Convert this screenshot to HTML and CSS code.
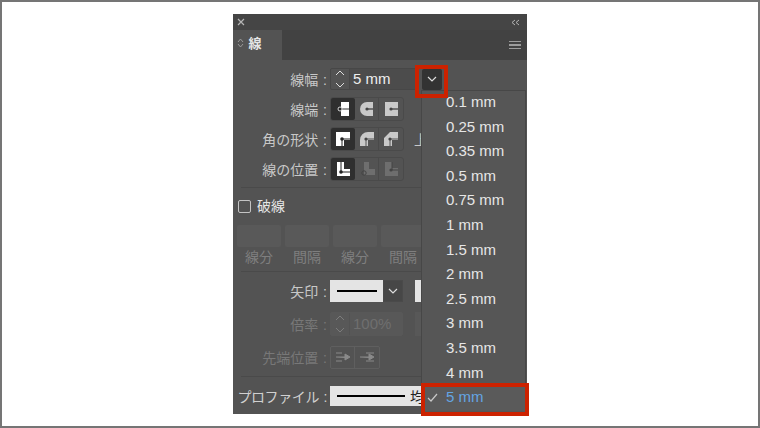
FILE: index.html
```html
<!DOCTYPE html>
<html lang="ja">
<head>
    <meta charset="UTF-8">
    <title>線パネル</title>
    <link rel="stylesheet" href="styles.css">
</head>
<body>
    <svg class="defs" width="0" height="0">
        <symbol id="cap-butt" viewBox="0 0 16 16"><path d="M6 1h8v14H6z" fill="currentColor"/><path d="M5 8h9" stroke="#333" stroke-width="1"/><circle cx="5" cy="8" r="2" fill="#222" stroke="#fff" stroke-width=".8"/></symbol>
        <symbol id="cap-round" viewBox="0 0 16 16"><path d="M8 1h6v14H8a7 7 0 0 1 0-14z" fill="currentColor"/><path d="M8 8h6" stroke="#555" stroke-width="1.5"/><circle cx="8" cy="8" r="1.6" fill="#444"/></symbol>
        <symbol id="cap-square" viewBox="0 0 16 16"><path d="M2 1h13v14H2z" fill="currentColor"/><path d="M8 8h7" stroke="#555" stroke-width="1.5"/><circle cx="8" cy="8" r="1.6" fill="#444"/></symbol>
        <symbol id="join-miter" viewBox="0 0 16 16"><path d="M1 1h14v8H9v6H1z" fill="currentColor"/><path d="M7 15V8h8" fill="none" stroke="#222"/><circle cx="7" cy="8" r="1.8" fill="#222"/></symbol>
        <symbol id="join-round" viewBox="0 0 16 16"><path d="M1 15V9a8 8 0 0 1 8-8h6v8H9v6z" fill="currentColor"/><path d="M7 15V8h8" fill="none" stroke="#555"/><circle cx="7" cy="8" r="1.6" fill="#444"/></symbol>
        <symbol id="join-bevel" viewBox="0 0 16 16"><path d="M1 15V7l6-6h8v8H9v6z" fill="currentColor"/><path d="M7 15V8h8" fill="none" stroke="#555"/><circle cx="7" cy="8" r="1.6" fill="#444"/></symbol>
        <symbol id="align-center" viewBox="0 0 16 16"><path d="M2 1h7v7h6v7H2z" fill="currentColor"/><path d="M6 1v10h9" fill="none" stroke="#222"/><circle cx="6" cy="11" r="1.8" fill="#222"/></symbol>
        <symbol id="align-inside" viewBox="0 0 16 16"><path d="M5 1h5v7h6v6H5z" fill="currentColor"/><circle cx="5" cy="12" r="2.2" fill="none" stroke="#444"/></symbol>
        <symbol id="align-outside" viewBox="0 0 16 16"><path d="M2 1h7v6h6v8H2z" fill="currentColor"/><path d="M9 1v8h6" fill="none" stroke="#444"/><circle cx="8" cy="9" r="1.6" fill="#444"/></symbol>
        <symbol id="chev" viewBox="0 0 10 6"><path d="M1 1l4 4 4-4" fill="none" stroke="currentColor" stroke-width="1.2"/></symbol>
        <symbol id="spin" viewBox="0 0 12 24"><path d="M2 8l4-4 4 4M2 16l4 4 4-4" fill="none" stroke="currentColor" stroke-width="1"/></symbol>
        <symbol id="tip-in" viewBox="0 0 16 14"><path d="M1 3h6M1 11h6" fill="none" stroke="currentColor"/><path d="M1 7h9V4l5 3-5 3V8" fill="currentColor" stroke="currentColor"/></symbol>
        <symbol id="tip-out" viewBox="0 0 16 14"><path d="M7 3h8M7 11h8" fill="none" stroke="currentColor"/><path d="M1 7h9V4l5 3-5 3V8" fill="currentColor" stroke="currentColor"/></symbol>
    </svg>

    <div class="frame">
        <div class="panel">
            <div class="titlebar">
                <svg class="close" width="8" height="8" viewBox="0 0 8 8"><path d="M1 1l6 6M7 1L1 7" stroke="currentColor" stroke-width="1.2"/></svg>
                <svg class="collapse" width="9" height="7" viewBox="0 0 9 7"><path d="M4 1L1 3.5 4 6M8 1L5 3.5 8 6" fill="none" stroke="currentColor"/></svg>
            </div>
            <div class="tabbar">
                <div class="tab">
                    <svg class="tab-arrows" width="7" height="10" viewBox="0 0 7 10"><path d="M1 4l2.500-3L6 4M1 6l2.500 3L6 6" fill="none" stroke="currentColor" stroke-width=".8"/></svg>
                    線
                </div>
                <div class="menu-icon"><i></i><i></i><i></i></div>
            </div>
            <div class="panel-body">
                <div class="row row-weight">
                    <span class="label">線幅 :</span>
                    <div class="stepper">
                        <span class="spin"><svg width="12" height="24"><use href="#spin"/></svg></span>
                        <span class="value">5 mm</span>
                    </div>
                    <span class="drop-btn"><svg width="10" height="6"><use href="#chev"/></svg></span>
                </div>
                <div class="row">
                    <span class="label">線端 :</span>
                    <div class="icon-group">
                        <span class="icon-btn active"><svg width="16" height="16"><use href="#cap-butt"/></svg></span>
                        <span class="icon-btn"><svg width="16" height="16"><use href="#cap-round"/></svg></span>
                        <span class="icon-btn"><svg width="16" height="16"><use href="#cap-square"/></svg></span>
                    </div>
                </div>
                <div class="row">
                    <span class="label">角の形状 :</span>
                    <div class="icon-group">
                        <span class="icon-btn active"><svg width="16" height="16"><use href="#join-miter"/></svg></span>
                        <span class="icon-btn"><svg width="16" height="16"><use href="#join-round"/></svg></span>
                        <span class="icon-btn"><svg width="16" height="16"><use href="#join-bevel"/></svg></span>
                    </div>
                    <span class="cut-label">上</span>
                </div>
                <div class="row">
                    <span class="label">線の位置 :</span>
                    <div class="icon-group">
                        <span class="icon-btn active"><svg width="16" height="16"><use href="#align-center"/></svg></span>
                        <span class="icon-btn dim"><svg width="16" height="16"><use href="#align-inside"/></svg></span>
                        <span class="icon-btn dim"><svg width="16" height="16"><use href="#align-outside"/></svg></span>
                    </div>
                </div>
                <hr class="sep sep-a">
                <label class="dash-check"><span class="checkbox"></span>破線</label>
                <div class="dash-grid">
                    <div class="dash-cell"><span class="dash-box"></span>線分</div>
                    <div class="dash-cell"><span class="dash-box"></span>間隔</div>
                    <div class="dash-cell"><span class="dash-box"></span>線分</div>
                    <div class="dash-cell"><span class="dash-box"></span>間隔</div>
                </div>
                <hr class="sep sep-b">
                <div class="row row-arrow">
                    <span class="label">矢印 :</span>
                    <div class="line-select">
                        <span class="line-preview"><i></i></span>
                        <span class="line-chev"><svg width="10" height="6"><use href="#chev"/></svg></span>
                    </div>
                    <span class="line-preview-cut"></span>
                </div>
                <div class="row row-scale dimmed">
                    <span class="label">倍率 :</span>
                    <div class="stepper stepper-dim">
                        <span class="spin"><svg width="12" height="24"><use href="#spin"/></svg></span>
                        <span class="value">100%</span>
                    </div>
                    <span class="stepper-cut"></span>
                </div>
                <div class="row row-tip dimmed">
                    <span class="label">先端位置 :</span>
                    <div class="tip-group">
                        <span class="tip-btn"><svg width="16" height="14"><use href="#tip-in"/></svg></span>
                        <span class="tip-btn"><svg width="16" height="14"><use href="#tip-out"/></svg></span>
                    </div>
                </div>
                <hr class="sep sep-c">
                <div class="row row-profile">
                    <span class="label label-wide">プロファイル :</span>
                    <div class="profile-select"><i></i><span>均等</span></div>
                </div>
            </div>

            <ul class="dropdown">
                <li>0.1 mm</li>
                <li>0.25 mm</li>
                <li>0.35 mm</li>
                <li>0.5 mm</li>
                <li>0.75 mm</li>
                <li>1 mm</li>
                <li>1.5 mm</li>
                <li>2 mm</li>
                <li>2.5 mm</li>
                <li>3 mm</li>
                <li>3.5 mm</li>
                <li>4 mm</li>
                <li class="selected">
                    <svg class="check" width="11" height="9" viewBox="0 0 11 9"><path d="M1 5l3 3 6-7" fill="none" stroke="currentColor" stroke-width="1.2"/></svg>
                    5 mm
                </li>
            </ul>
            <div class="mark mark-btn"></div>
            <div class="mark mark-item"></div>
        </div>
    </div>
</body>
</html>
```

FILE: styles.css
```css
* {
    margin: 0;
    padding: 0;
    box-sizing: border-box;
}

body {
    width: 760px;
    height: 428px;
    background-color: #fff;
    font-family: 'Liberation Sans', 'Noto Sans CJK JP', sans-serif;
    overflow: hidden;
}

.defs {
    position: absolute;
}

.frame {
    width: 760px;
    height: 428px;
    border: 2px solid #757575;
    padding-top: 12px;
    display: flex;
    justify-content: center;
}

.panel {
    position: relative;
    width: 294px;
    height: 400px;
    background-color: #535353;
    color: #e0e0e0;
}

.titlebar {
    height: 16px;
    background-color: #454545;
    display: flex;
    justify-content: space-between;
    align-items: center;
    padding: 0 7px 0 4px;
    color: #b5b5b5;
}

.tabbar {
    height: 30px;
    background-color: #424242;
    display: flex;
    justify-content: space-between;
    align-items: center;
}

.tab {
    width: 49px;
    height: 30px;
    background-color: #535353;
    font-size: 13px;
    font-weight: 700;
    line-height: 28px;
    padding-left: 4px;
    color: #e6e6e6;
}

.tab-arrows {
    color: #aaa;
    margin-right: 1px;
}

.menu-icon {
    width: 12px;
    margin-right: 6px;
    display: flex;
    flex-direction: column;
    gap: 2px;
}

.menu-icon i {
    display: block;
    height: 1.5px;
    background-color: #9c9c9c;
}

.panel-body {
    padding-top: 4px;
}

.row {
    display: flex;
    align-items: center;
    height: 30px;
    font-size: 14px;
}

.label {
    width: 94px;
    margin-right: 3px;
    margin-top: -1px;
    flex: none;
    text-align: right;
    color: #c8c8c8;
    font-size: 14px;
    word-spacing: 1px;
    white-space: nowrap;
}

.stepper {
    display: flex;
    height: 22px;
    width: 86px;
    border: 1px solid #474747;
    border-radius: 2px;
}

.spin {
    width: 19px;
    display: flex;
    align-items: center;
    justify-content: center;
    border-right: 1px solid #474747;
    color: #ddd;
}

.value {
    padding-left: 3px;
    line-height: 20px;
    font-size: 15px;
    color: #eee;
    background-color: #4c4c4c;
    flex: 1;
}

.drop-btn {
    width: 20px;
    height: 21px;
    margin-left: 6px;
    background-color: #333;
    border-radius: 2px;
    display: flex;
    align-items: center;
    justify-content: center;
    color: #ddd;
}

.icon-group {
    display: flex;
    height: 24px;
    margin-bottom: 1px;
    border: 1px solid #4a4a4a;
    border-radius: 3px;
}

.icon-btn {
    width: 24px;
    height: 22px;
    display: flex;
    align-items: center;
    justify-content: center;
    color: #c9c9c9;
    border-right: 1px solid #4a4a4a;
}

.icon-btn:last-child {
    border-right: 0;
}

.icon-btn.active {
    background-color: #2f2f2f;
    color: #fff;
    border-radius: 2px;
    border-right: 0;
}

.icon-btn.dim {
    color: #6e6e6e;
}

.cut-label {
    margin-left: 10px;
    color: #c8c8c8;
    font-size: 14px;
}

.sep {
    border: 0;
    border-top: 1px solid #4a4a4a;
    margin: 0 8px;
    width: 180px;
}

.sep-a {
    margin-top: 3px;
}

.dash-check {
    display: flex;
    align-items: center;
    height: 36px;
    padding-left: 5px;
    font-size: 14px;
    line-height: 34px;
    color: #e6e6e6;
}

.checkbox {
    width: 13px;
    height: 13px;
    border: 1px solid #c4c4c4;
    border-radius: 2px;
    margin-right: 6px;
}

.dash-grid {
    display: flex;
    gap: 4px;
    padding-left: 4px;
    padding-top: 1px;
    height: 47px;
}

.dash-cell {
    width: 44px;
    flex: none;
    text-align: center;
    font-size: 14px;
    color: #7f7f7f;
    line-height: 19px;
}

.dash-box {
    display: block;
    height: 22px;
    background-color: #595959;
    border-radius: 2px;
    margin-bottom: 1px;
}

.row-arrow {
    height: 38px;
}

.line-select {
    display: flex;
    height: 22px;
    width: 73px;
}

.line-preview {
    width: 53px;
    background-color: #e4e4e4;
    display: flex;
    align-items: center;
    justify-content: center;
}

.line-preview i {
    display: block;
    width: 40px;
    height: 2px;
    background-color: #000;
}

.line-chev {
    flex: 1;
    display: flex;
    align-items: center;
    justify-content: center;
    background-color: #474747;
    border: 1px solid #4a4a4a;
    color: #ddd;
}

.line-preview-cut {
    width: 6px;
    height: 22px;
    margin-left: 12px;
    background-color: #e4e4e4;
}

.row-scale {
    height: 28px;
}

.dimmed .label {
    color: #787878;
}

.stepper-dim {
    width: 73px;
    height: 24px;
    border-color: #585858;
    background-color: #585858;
}

.stepper-dim .spin {
    color: #7c7c7c;
    border-right-color: #535353;
}

.stepper-dim .value {
    background-color: #585858;
    color: #6f6f6f;
    line-height: 22px;
}

.stepper-cut {
    width: 6px;
    height: 24px;
    margin-left: 12px;
    background-color: #585858;
}

.row-tip {
    height: 38px;
}

.tip-group {
    display: flex;
    height: 23px;
    border: 1px solid #5f5f5f;
    border-radius: 2px;
}

.tip-btn {
    width: 24px;
    display: flex;
    align-items: center;
    justify-content: center;
    color: #8a8a8a;
    border-right: 1px solid #5f5f5f;
}

.tip-btn:last-child {
    border-right: 0;
}

.row-profile {
    height: 36px;
    padding-top: 2px;
}

.label-wide {
    color: #d0d0d0;
    letter-spacing: -0.4px;
}

.profile-select {
    flex: 1;
    height: 20px;
    background-color: #e4e4e4;
    display: flex;
    align-items: center;
    padding-left: 7px;
    color: #222;
    font-size: 14px;
    overflow: hidden;
    white-space: nowrap;
}

.profile-select i {
    display: block;
    flex: none;
    width: 68px;
    height: 2px;
    background-color: #000;
    margin-right: 5px;
}

.dropdown {
    position: absolute;
    left: 188px;
    top: 76px;
    width: 105px;
    height: 324px;
    list-style: none;
    background-color: #565656;
    border: 1px solid #474747;
    font-size: 15px;
    color: #e6e6e6;
}

.dropdown li {
    height: 24.6px;
    line-height: 22px;
    padding-left: 24px;
}

.dropdown .selected {
    position: relative;
    color: #64a5e3;
    background-color: #5a5a5a;
}

.check {
    position: absolute;
    left: 5px;
    top: 7px;
    color: #c8c8c8;
}

.mark {
    position: absolute;
    border: 4px solid #cc2200;
}

.mark-btn {
    left: 182px;
    top: 51px;
    width: 33px;
    height: 33px;
}

.mark-item {
    left: 188px;
    top: 369px;
    width: 108px;
    height: 33px;
}
```
